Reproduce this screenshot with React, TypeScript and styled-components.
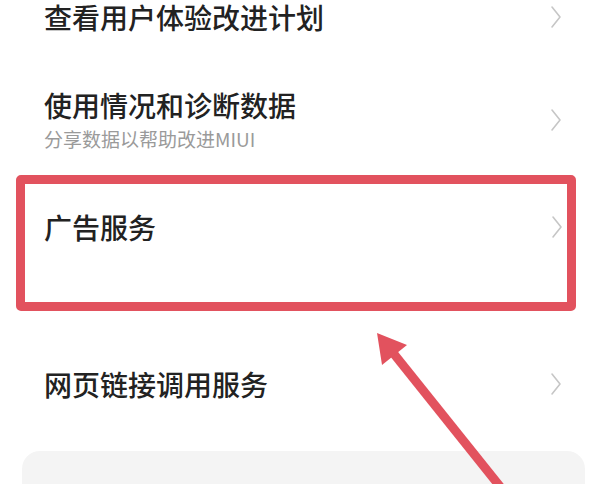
import styled, { createGlobalStyle } from 'styled-components';

const GlobalStyle = createGlobalStyle`
  html, body {
    margin: 0;
    padding: 0;
    background: #ffffff;
    overflow: hidden;
  }
  body {
    font-family: "Noto Sans CJK SC", "Noto Sans", sans-serif;
    color: #222222;
  }
`;

const Screen = styled.div`
  position: relative;
  width: 600px;
  height: 484px;
  overflow: hidden;
  background: #ffffff;
`;

const List = styled.div`
  display: flex;
  flex-direction: column;
`;

const Row = styled.div<{ $top: number }>`
  display: flex;
  align-items: center;
  justify-content: space-between;
  margin-top: ${({ $top }) => $top}px;
  padding: 0 38px 0 44px;
`;

const Highlight = styled.div`
  margin: 23px 24px 0 16px;
  height: 136px;
  box-sizing: border-box;
  border: 9px solid #e2525e;
  border-radius: 5px;
  padding: 26px 4px 0 19px;
`;

const HighlightRow = styled.div`
  display: flex;
  align-items: center;
  justify-content: space-between;
`;

const Texts = styled.div`
  display: flex;
  flex-direction: column;
`;

const Title = styled.div`
  font-size: 28px;
  line-height: 34px;
  font-weight: 500;
  color: #222222;
  white-space: nowrap;
`;

const Subtitle = styled.div`
  margin-top: 4px;
  font-size: 19px;
  line-height: 26px;
  color: #9a9a9a;
  white-space: nowrap;
`;

const Card = styled.div`
  margin: 50px 15px 0 22px;
  height: 120px;
  border-radius: 18px;
  background: #f4f4f4;
`;

const ArrowLayer = styled.svg`
  position: absolute;
  left: 0;
  top: 0;
  pointer-events: none;
`;

const Chevron = () => (
  <svg width="12" height="24" viewBox="0 0 12 24">
    <polyline
      points="2,2 10,12 2,22"
      fill="none"
      stroke="#c6c6c6"
      strokeWidth="1.6"
      strokeLinecap="round"
      strokeLinejoin="round"
    />
  </svg>
);

export default function App() {
  return (
    <Screen>
      <GlobalStyle />
      <List>
        <Row $top={0}>
          <Title>查看用户体验改进计划</Title>
          <Chevron />
        </Row>
        <Row $top={54}>
          <Texts>
            <Title>使用情况和诊断数据</Title>
            <Subtitle>分享数据以帮助改进MIUI</Subtitle>
          </Texts>
          <Chevron />
        </Row>
        <Highlight>
          <HighlightRow>
            <Title>广告服务</Title>
            <Chevron />
          </HighlightRow>
        </Highlight>
        <Row $top={56}>
          <Title>网页链接调用服务</Title>
          <Chevron />
        </Row>
        <Card />
      </List>
      <ArrowLayer width="600" height="484" viewBox="0 0 600 484">
        <line x1="506" y1="494" x2="390" y2="349" stroke="#e2525e" strokeWidth="9" />
        <polygon points="377,333 407,345 382,365" fill="#e2525e" />
      </ArrowLayer>
    </Screen>
  );
}
